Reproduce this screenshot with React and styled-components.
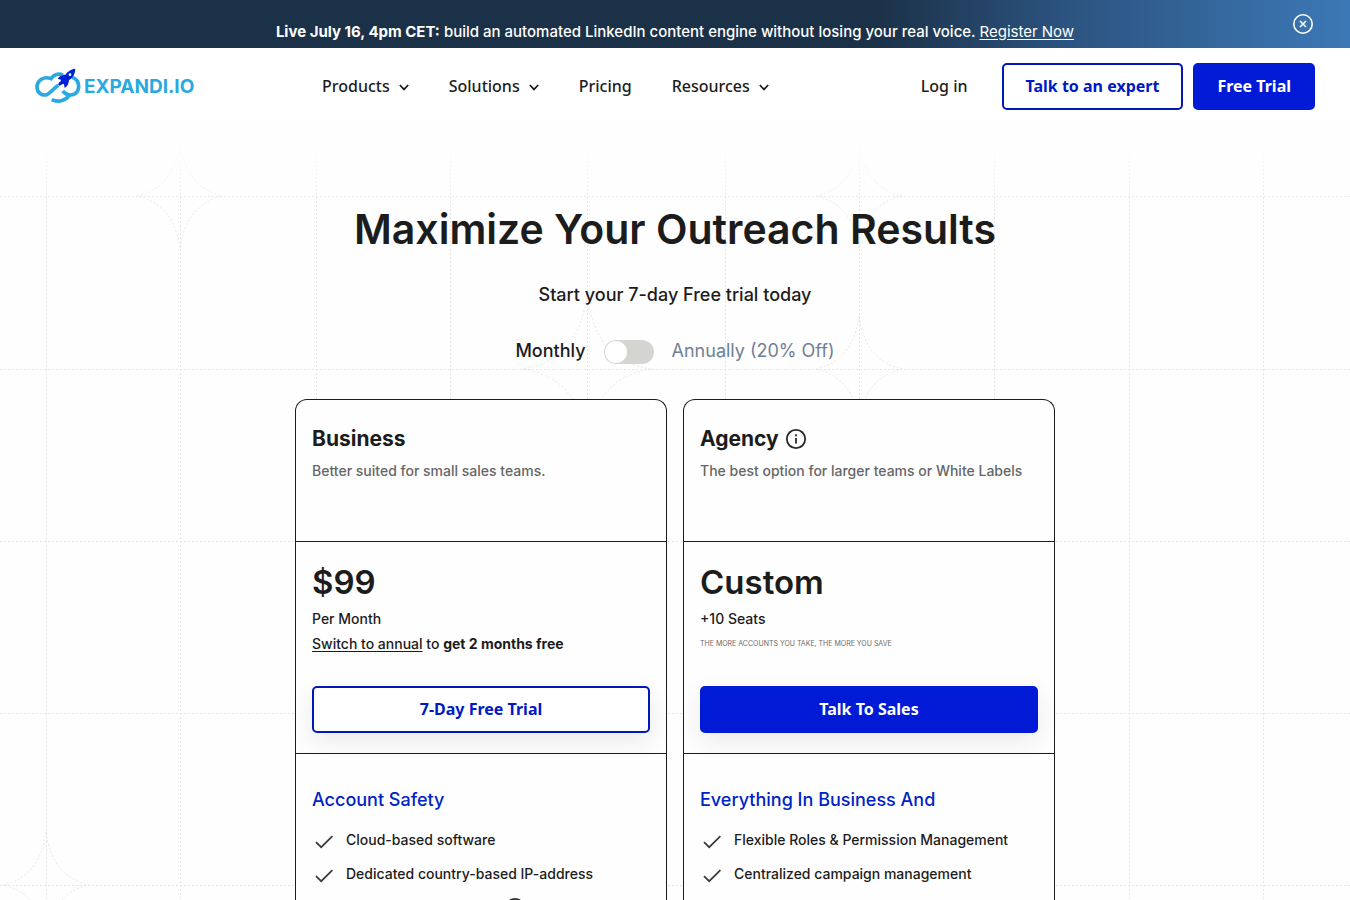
import { useState } from "react";
import styled, { createGlobalStyle, css } from "styled-components";

const GlobalStyle = createGlobalStyle`
  * {
    box-sizing: border-box;
  }
  body {
    margin: 0;
    background: #fefefe;
    color: #1c1c1c;
    font-family: "Inter", "Liberation Sans", sans-serif;
  }
  h1, h2, h3, p, ul {
    margin: 0;
    padding: 0;
  }
  button {
    font-family: inherit;
    cursor: pointer;
  }
`;

const Page = styled.div`
  position: relative;
  min-height: 100vh;
  overflow: hidden;
`;

/* announcement */
const Banner = styled.div`
  display: flex;
  align-items: center;
  height: 48px;
  padding: 0 36px;
  color: #fff;
  background: linear-gradient(90deg, #1b3148 65%, #2c5480 79%, #3c78b6 100%);
`;
const BannerText = styled.p`
  flex: 1;
  padding: 15px 0 0 22px;
  text-align: center;
  font-size: 15px;
  line-height: 20px;
  font-weight: 500;
  a {
    color: inherit;
    font-weight: 400;
    text-underline-offset: 2px;
  }
`;
const CloseButton = styled.button`
  display: flex;
  padding: 0;
  border: none;
  background: none;
  color: #fff;
`;

/* header */
const Header = styled.header`
  display: flex;
  align-items: center;
  padding: 15px 35px;
  background: #fff;
  font-family: "Noto Sans", sans-serif;
`;
const Logo = styled.a`
  display: flex;
  align-items: center;
  width: 162px;
  gap: 3px;
  color: #29a9df;
  font-family: "Inter", sans-serif;
  font-size: 19px;
  font-weight: 700;
  line-height: 24px;
  text-decoration: none;
  svg {
    flex-shrink: 0;
  }
`;
const Nav = styled.nav`
  display: flex;
  gap: 40px;
  margin-left: 125px;
`;
const navText = css`
  display: flex;
  align-items: center;
  gap: 9px;
  padding: 0 0 2px;
  border: none;
  background: none;
  color: #1c1c1c;
  font-size: 16px;
  font-weight: 500;
  line-height: 24px;
  text-decoration: none;
  svg {
    margin-top: 4px;
  }
`;
const NavButton = styled.button`
  ${navText}
`;
const NavLink = styled.a`
  ${navText}
`;
const Actions = styled.div`
  display: flex;
  align-items: center;
  gap: 10px;
  margin-left: auto;
  ${NavLink} {
    margin-right: 24px;
  }
`;
const Button = styled.a`
  display: block;
  padding: 9px 22px 10px;
  border: 2px solid ${(p) => (p.$filled ? "#001ad6" : "#0019b5")};
  border-radius: 5px;
  background: ${(p) => (p.$filled ? "#001ad6" : "#fff")};
  color: ${(p) => (p.$filled ? "#fff" : "#0019c4")};
  font-family: "Noto Sans", sans-serif;
  font-size: 16px;
  font-weight: 700;
  line-height: 24px;
  text-align: center;
  text-decoration: none;
  white-space: nowrap;
`;

/* dashed grid behind the content */
const Backdrop = styled.svg`
  position: absolute;
  top: 125px;
  left: 50%;
  margin-left: -675px;
  z-index: -1;
  pointer-events: none;
`;

/* hero */
const Hero = styled.main`
  display: flex;
  flex-direction: column;
  align-items: center;
  padding: 76px 20px 0;
`;
const Title = styled.h1`
  font-size: 41px;
  line-height: 56px;
  font-weight: 600;
  text-align: center;
`;
const Subtitle = styled.p`
  margin-top: 26px;
  font-size: 18px;
  line-height: 24px;
  font-weight: 500;
`;
const Billing = styled.div`
  display: flex;
  align-items: center;
  gap: 18px;
  margin-top: 31px;
  font-size: 18px;
  line-height: 24px;
`;
const BillingLabel = styled.label`
  color: ${(p) => (p.$muted ? "#718096" : "#1c1c1c")};
  font-weight: ${(p) => (p.$muted ? 400 : 500)};
`;
const Toggle = styled.input`
  appearance: none;
  width: 50px;
  height: 24px;
  margin: 2px 0 0;
  padding: 1px;
  border-radius: 12px;
  background: #d4d4d1;
  cursor: pointer;
  &::before {
    content: "";
    display: block;
    width: 22px;
    height: 22px;
    border-radius: 50%;
    background: #fff;
    margin-left: ${(p) => (p.checked ? "26px" : "0")};
  }
`;

/* plans */
const Plans = styled.div`
  display: grid;
  grid-template-columns: repeat(2, minmax(0, 1fr));
  gap: 16px;
  width: 100%;
  max-width: 760px;
  margin-top: 35px;
`;
const Card = styled.section`
  border: 1px solid #1c1c1c;
  border-bottom: none;
  border-radius: 12px 12px 0 0;
  background: #fefefe;
  font-size: 14px;
  font-weight: 500;
`;
const CardHead = styled.div`
  height: 142px;
  padding: 24px 16px;
  border-bottom: 1px solid #1c1c1c;
`;
const PlanName = styled.h2`
  display: flex;
  align-items: center;
  gap: 6px;
  font-size: 21px;
  line-height: 30px;
  font-weight: 700;
`;
const PlanText = styled.p`
  margin-top: 6px;
  color: #666;
  line-height: 22px;
`;
const CardPrice = styled.div`
  padding: 20px 16px;
  border-bottom: 1px solid #1c1c1c;
  ${Button} {
    margin-top: 30px;
    box-shadow: 0 8px 24px rgba(20, 30, 60, 0.09);
  }
`;
const Price = styled.p`
  font-size: 33px;
  line-height: 40px;
  font-weight: 600;
`;
const PriceUnit = styled.p`
  margin-top: 6px;
  line-height: 22px;
`;
const PriceNote = styled.p`
  margin-top: 2px;
  line-height: 24px;
  a {
    color: inherit;
    text-underline-offset: 2px;
  }
  b {
    font-weight: 700;
  }
`;
const SmallNote = styled(PriceNote)`
  color: #6a6a6a;
  font-size: 7px;
  font-weight: 400;
`;
const CardFeatures = styled.div`
  padding: 32px 16px 24px;
`;
const FeatureTitle = styled.h3`
  color: #0024c4;
  font-size: 18px;
  line-height: 28px;
  font-weight: 500;
`;
const FeatureList = styled.ul`
  display: flex;
  flex-direction: column;
  gap: 10px;
  margin-top: 14px;
  list-style: none;
`;
const Feature = styled.li`
  display: flex;
  align-items: center;
  gap: 10px;
  line-height: 24px;
  svg {
    flex-shrink: 0;
  }
`;

const Chevron = () => (
  <svg width="10" height="7" viewBox="0 0 10 7" fill="none" stroke="currentColor" strokeWidth="1.7" aria-hidden="true">
    <path d="M.8 1 5 5.4 9.2 1" />
  </svg>
);

const Info = () => (
  <svg width="22" height="22" viewBox="0 0 22 22" fill="none" stroke="#2a2a2a" strokeWidth="1.8" aria-hidden="true">
    <circle cx="11" cy="11" r="9.2" />
    <path d="M11 10v5.6M11 6.2v2" />
  </svg>
);

const Check = () => (
  <svg width="24" height="24" viewBox="0 0 24 24" fill="none" stroke="#3a3a3a" strokeWidth="1.7" aria-hidden="true">
    <path d="M4 14.2 9.2 19.2 20.4 8.2" />
  </svg>
);

const LogoMark = () => (
  <svg width="46" height="37" viewBox="29 22 138 111" fill="none" aria-hidden="true">
    <g stroke="#29a9df" strokeWidth="11">
      <path d="M113 44C101 37 85 41 77 54C57 46 36 57 35 78C35 97 50 106 64 102C74 99 80 87 99 74" />
      <path d="M140 50C153 54 160 66 160 79C159 95 147 104 134 103C124 102 118 98 112 91" />
      <path d="M133 102C122 119 101 127 79 117" />
    </g>
    <path fill="#0020d8" d="M150 24C139 25 128 31 120 42C111 42 104 45 97 54L107 57L104 68L116 71L118 82C127 77 130 69 131 59C144 50 150 38 150 24Z" />
    <path fill="#0020d8" d="M104 62 98 71 103 75 112 70Z" />
    <circle cx="134" cy="42" r="4" fill="#fff" />
  </svg>
);

const CloseIcon = () => (
  <svg width="22" height="22" viewBox="0 0 22 22" fill="none" stroke="currentColor" strokeWidth="1.6" aria-hidden="true">
    <circle cx="11" cy="11" r="9.2" />
    <path d="m8 8 6 6m0-6-6 6" />
  </svg>
);

const columns = [46, 180, 316, 450, 587, 725, 859, 994, 1129, 1263];
const rows = [71, 244, 416, 588, 760];
const stars = [
  { x: 180, y: 71, rx: 43, ry: 53 },
  { x: 859, y: 71, rx: 43, ry: 53 },
  { x: 587, y: 244, rx: 65, ry: 78 },
  { x: 859, y: 244, rx: 43, ry: 53 },
  { x: 46, y: 760, rx: 43, ry: 53 },
];

// four-pointed star with concave sides
const starPath = ({ x, y, rx, ry }) =>
  `M${x} ${y - ry}Q${x + 6} ${y - 8} ${x + rx} ${y}Q${x + 6} ${y + 8} ${x} ${y + ry}` +
  `Q${x - 6} ${y + 8} ${x - rx} ${y}Q${x - 6} ${y - 8} ${x} ${y - ry}`;

const Grid = () => (
  <Backdrop width="1350" height="900" viewBox="0 0 1350 900" fill="none" aria-hidden="true">
    <defs>
      <linearGradient id="fade" x1="0" y1="0" x2="0" y2="900" gradientUnits="userSpaceOnUse">
        <stop offset="0.02" stopColor="#fff" stopOpacity="0" />
        <stop offset="0.09" stopColor="#fff" />
      </linearGradient>
      <mask id="fadeMask" maskUnits="userSpaceOnUse" x="0" y="0" width="1350" height="900">
        <rect width="1350" height="900" fill="url(#fade)" />
      </mask>
    </defs>
    <g mask="url(#fadeMask)" stroke="#e6e6e6" strokeDasharray="2 2">
      {columns.map((x) => (
        <path key={x} d={`M${x + 0.5} 0V900`} />
      ))}
      {rows.map((y) => (
        <path key={y} d={`M0 ${y + 0.5}H1350`} />
      ))}
      {stars.map((s) => (
        <path key={`${s.x}-${s.y}`} d={starPath(s)} />
      ))}
    </g>
  </Backdrop>
);

const FeatureItems = ({ items }) => (
  <FeatureList>
    {items.map((item) => (
      <Feature key={item.text}>
        <Check />
        {item.text}
        {item.info && <Info />}
      </Feature>
    ))}
  </FeatureList>
);

const businessFeatures = [
  { text: "Cloud-based software" },
  { text: "Dedicated country-based IP-address" },
  { text: "Auto warm-up feature", info: true },
];
const agencyFeatures = [
  { text: "Flexible Roles & Permission Management" },
  { text: "Centralized campaign management" },
];

const App = () => {
  const [annual, setAnnual] = useState(false);
  const [banner, setBanner] = useState(true);

  return (
    <>
      <GlobalStyle />
      <Page>
        {banner && (
          <Banner>
            <BannerText>
              <b>Live July 16, 4pm CET:</b> build an automated LinkedIn content engine without losing your real voice.{" "}
              <a href="#register">Register Now</a>
            </BannerText>
            <CloseButton aria-label="Close" onClick={() => setBanner(false)}>
              <CloseIcon />
            </CloseButton>
          </Banner>
        )}
        <Header>
          <Logo href="#home">
            <LogoMark />
            EXPANDI.IO
          </Logo>
          <Nav>
            <NavButton>Products <Chevron /></NavButton>
            <NavButton>Solutions <Chevron /></NavButton>
            <NavLink href="#pricing">Pricing</NavLink>
            <NavButton>Resources <Chevron /></NavButton>
          </Nav>
          <Actions>
            <NavLink href="#login">Log in</NavLink>
            <Button href="#expert">Talk to an expert</Button>
            <Button href="#trial" $filled>Free Trial</Button>
          </Actions>
        </Header>
        <Grid />
        <Hero>
          <Title>Maximize Your Outreach Results</Title>
          <Subtitle>Start your 7-day Free trial today</Subtitle>
          <Billing>
            <BillingLabel htmlFor="billing" $muted={annual}>Monthly</BillingLabel>
            <Toggle
              id="billing"
              type="checkbox"
              role="switch"
              checked={annual}
              onChange={(e) => setAnnual(e.target.checked)}
            />
            <BillingLabel htmlFor="billing" $muted={!annual}>Annually (20% Off)</BillingLabel>
          </Billing>
          <Plans>
            <Card>
              <CardHead>
                <PlanName>Business</PlanName>
                <PlanText>Better suited for small sales teams.</PlanText>
              </CardHead>
              <CardPrice>
                <Price>$99</Price>
                <PriceUnit>Per Month</PriceUnit>
                <PriceNote>
                  <a href="#annual">Switch to annual</a> to <b>get 2 months free</b>
                </PriceNote>
                <Button href="#trial">7-Day Free Trial</Button>
              </CardPrice>
              <CardFeatures>
                <FeatureTitle>Account Safety</FeatureTitle>
                <FeatureItems items={businessFeatures} />
              </CardFeatures>
            </Card>
            <Card>
              <CardHead>
                <PlanName>Agency <Info /></PlanName>
                <PlanText>The best option for larger teams or White Labels</PlanText>
              </CardHead>
              <CardPrice>
                <Price>Custom</Price>
                <PriceUnit>+10 Seats</PriceUnit>
                <SmallNote>THE MORE ACCOUNTS YOU TAKE, THE MORE YOU SAVE</SmallNote>
                <Button href="#sales" $filled>Talk To Sales</Button>
              </CardPrice>
              <CardFeatures>
                <FeatureTitle>Everything In Business And</FeatureTitle>
                <FeatureItems items={agencyFeatures} />
              </CardFeatures>
            </Card>
          </Plans>
        </Hero>
      </Page>
    </>
  );
};

export default App;
